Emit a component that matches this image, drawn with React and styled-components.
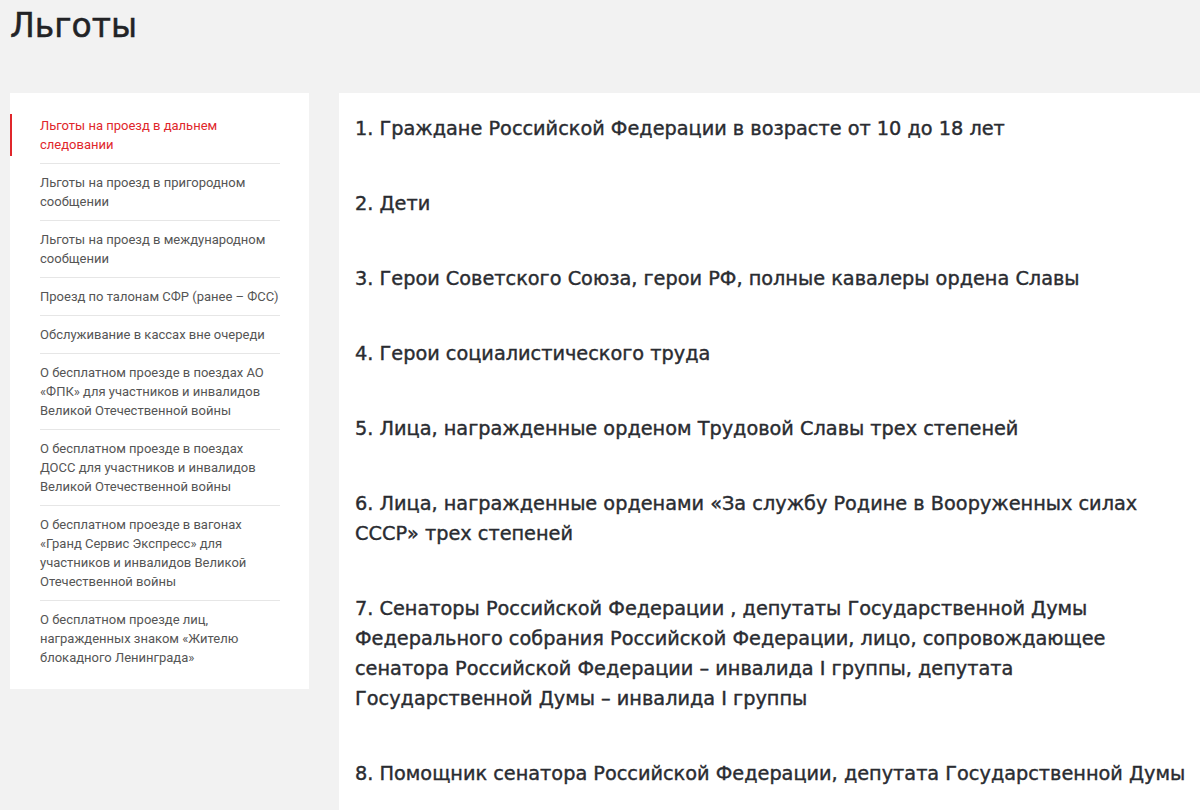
import React from 'react'
import styled, { createGlobalStyle } from 'styled-components';

const GlobalStyle = createGlobalStyle`
    html, body{
        margin: 0;
        padding: 0;
        background-color: #f2f2f2;
    }
    body{
        font-family: Roboto, "Liberation Sans", sans-serif;
        overflow: hidden;
    }
`;

const menu = [
    'Льготы на проезд в дальнем следовании',
    'Льготы на проезд в пригородном сообщении',
    'Льготы на проезд в международном сообщении',
    'Проезд по талонам СФР (ранее – ФСС)',
    'Обслуживание в кассах вне очереди',
    'О бесплатном проезде в поездах АО «ФПК» для участников и инвалидов Великой Отечественной войны',
    'О бесплатном проезде в поездах ДОСС для участников и инвалидов Великой Отечественной войны',
    'О бесплатном проезде в вагонах «Гранд Сервис Экспресс» для участников и инвалидов Великой Отечественной войны',
    'О бесплатном проезде лиц, награжденных знаком «Жителю блокадного Ленинграда»',
];

const items = [
    ['1. Граждане Российской Федерации в возрасте от 10 до 18 лет'],
    ['2. Дети'],
    ['3. Герои Советского Союза, герои РФ, полные кавалеры ордена Славы'],
    ['4. Герои социалистического труда'],
    ['5. Лица, награжденные орденом Трудовой Славы трех степеней'],
    ['6. Лица, награжденные орденами «За службу Родине в Вооруженных силах', 'СССР» трех степеней'],
    [
        '7. Сенаторы Российской Федерации , депутаты Государственной Думы',
        'Федерального собрания Российской Федерации, лицо, сопровождающее',
        'сенатора Российской Федерации – инвалида I группы, депутата',
        'Государственной Думы – инвалида I группы'
    ],
    ['8. Помощник сенатора Российской Федерации, депутата Государственной Думы'],
];

function App() {
    return (
        <>
            <GlobalStyle />
            <Page>
                <Title>Льготы</Title>
                <Layout>
                    <Sidebar>
                        {menu.map((m, i) => (
                            <MenuItem key={i} active={i === 0}>{m}</MenuItem>
                        ))}
                    </Sidebar>
                    <Content>
                        {items.map((lines, i) => (
                            <Paragraph key={i}>
                                {lines.map((l, j) => (
                                    <React.Fragment key={j}>
                                        {j > 0 && <br />}
                                        {l}
                                    </React.Fragment>
                                ))}
                            </Paragraph>
                        ))}
                    </Content>
                </Layout>
            </Page>
        </>
    )
}

const Page = styled.div`
    padding-left: 10px;
    height: 810px;
    box-sizing: border-box;
`;

const Title = styled.h1`
    margin: 0;
    padding-top: 6px;
    height: 93px;
    box-sizing: border-box;
    font-family: "DejaVu Sans", sans-serif;
    font-weight: 500;
    font-size: 33px;
    line-height: 40px;
    color: #222326;
    -webkit-text-stroke: 0.5px #222326;
`;

const Layout = styled.div`
    display: flex;
    align-items: flex-start;
    gap: 30px;
`;

const Sidebar = styled.nav`
    width: 299px;
    flex-shrink: 0;
    background-color: #ffffff;
    padding: 14px 29px 13px 30px;
    box-sizing: border-box;
`;

const MenuItem = styled.div`
    position: relative;
    padding: 9px 0 9px 0;
    font-size: 13px;
    line-height: 19px;
    color: ${p => p.active ? '#e0262b' : '#555555'};
    border-bottom: 1px solid #e6e6e6;
    cursor: pointer;
    &:last-child{
        border-bottom: none;
    }
    &::before{
        content: '';
        display: ${p => p.active ? 'block' : 'none'};
        position: absolute;
        left: -30px;
        top: 7px;
        bottom: 7px;
        width: 2px;
        background-color: #e0262b;
    }
`;

const Content = styled.main`
    flex: 1;
    min-height: 740px;
    background-color: #ffffff;
    padding: 21px 0 0 16px;
    box-sizing: border-box;
    white-space: nowrap;
`;

const Paragraph = styled.p`
    margin: 0 0 45px 0;
    font-family: "DejaVu Sans", sans-serif;
    font-weight: 500;
    font-size: 19.3px;
    line-height: 30px;
    color: #2a2c31;
    -webkit-text-stroke: 0.4px #2a2c31;
`;

export default App;
